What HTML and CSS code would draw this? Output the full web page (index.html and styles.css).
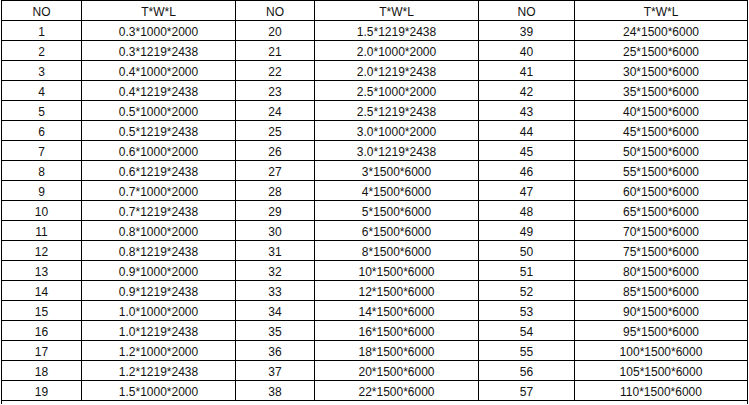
FILE: index.html
```html
<!DOCTYPE html>
<html>
<head>
<meta charset="utf-8">
<link rel="stylesheet" href="styles.css">
</head>
<body>
<table class="spec">
<colgroup>
<col class="c-no1"><col class="c-twl1"><col class="c-no2"><col class="c-twl2"><col class="c-no3"><col class="c-twl3">
</colgroup>
<tbody>
<tr><td>NO</td><td>T*W*L</td><td>NO</td><td>T*W*L</td><td>NO</td><td>T*W*L</td></tr>
<tr><td>1</td><td>0.3*1000*2000</td><td>20</td><td>1.5*1219*2438</td><td>39</td><td>24*1500*6000</td></tr>
<tr><td>2</td><td>0.3*1219*2438</td><td>21</td><td>2.0*1000*2000</td><td>40</td><td>25*1500*6000</td></tr>
<tr><td>3</td><td>0.4*1000*2000</td><td>22</td><td>2.0*1219*2438</td><td>41</td><td>30*1500*6000</td></tr>
<tr><td>4</td><td>0.4*1219*2438</td><td>23</td><td>2.5*1000*2000</td><td>42</td><td>35*1500*6000</td></tr>
<tr><td>5</td><td>0.5*1000*2000</td><td>24</td><td>2.5*1219*2438</td><td>43</td><td>40*1500*6000</td></tr>
<tr><td>6</td><td>0.5*1219*2438</td><td>25</td><td>3.0*1000*2000</td><td>44</td><td>45*1500*6000</td></tr>
<tr><td>7</td><td>0.6*1000*2000</td><td>26</td><td>3.0*1219*2438</td><td>45</td><td>50*1500*6000</td></tr>
<tr><td>8</td><td>0.6*1219*2438</td><td>27</td><td>3*1500*6000</td><td>46</td><td>55*1500*6000</td></tr>
<tr><td>9</td><td>0.7*1000*2000</td><td>28</td><td>4*1500*6000</td><td>47</td><td>60*1500*6000</td></tr>
<tr><td>10</td><td>0.7*1219*2438</td><td>29</td><td>5*1500*6000</td><td>48</td><td>65*1500*6000</td></tr>
<tr><td>11</td><td>0.8*1000*2000</td><td>30</td><td>6*1500*6000</td><td>49</td><td>70*1500*6000</td></tr>
<tr><td>12</td><td>0.8*1219*2438</td><td>31</td><td>8*1500*6000</td><td>50</td><td>75*1500*6000</td></tr>
<tr><td>13</td><td>0.9*1000*2000</td><td>32</td><td>10*1500*6000</td><td>51</td><td>80*1500*6000</td></tr>
<tr><td>14</td><td>0.9*1219*2438</td><td>33</td><td>12*1500*6000</td><td>52</td><td>85*1500*6000</td></tr>
<tr><td>15</td><td>1.0*1000*2000</td><td>34</td><td>14*1500*6000</td><td>53</td><td>90*1500*6000</td></tr>
<tr><td>16</td><td>1.0*1219*2438</td><td>35</td><td>16*1500*6000</td><td>54</td><td>95*1500*6000</td></tr>
<tr><td>17</td><td>1.2*1000*2000</td><td>36</td><td>18*1500*6000</td><td>55</td><td>100*1500*6000</td></tr>
<tr><td>18</td><td>1.2*1219*2438</td><td>37</td><td>20*1500*6000</td><td>56</td><td>105*1500*6000</td></tr>
<tr><td>19</td><td>1.5*1000*2000</td><td>38</td><td>22*1500*6000</td><td>57</td><td>110*1500*6000</td></tr>
<tr><td class="tail" colspan="6"></td></tr>
</tbody>
</table>
</body>
</html>
```
FILE: styles.css
```css
html, body {
  margin: 0;
  padding: 0;
  background: #ffffff;
}
body {
  padding-left: 1px;
  font-family: "Liberation Sans", Arial, sans-serif;
  font-size: 12px;
  color: #111111;
}
.spec {
  border-collapse: collapse;
  table-layout: fixed;
  width: 747px;
}
.c-no1 { width: 80px; }
.c-twl1 { width: 154px; }
.c-no2 { width: 79px; }
.c-twl2 { width: 164px; }
.c-no3 { width: 96px; }
.c-twl3 { width: 173px; }
.spec td {
  border: 1px solid #000000;
  padding: 3px 0 0 0;
  height: 16px;
  line-height: 16px;
  text-align: center;
  white-space: nowrap;
}
.spec td.tail {
  padding: 0;
  height: 3px;
  line-height: 3px;
  border-bottom: none;
}
```
